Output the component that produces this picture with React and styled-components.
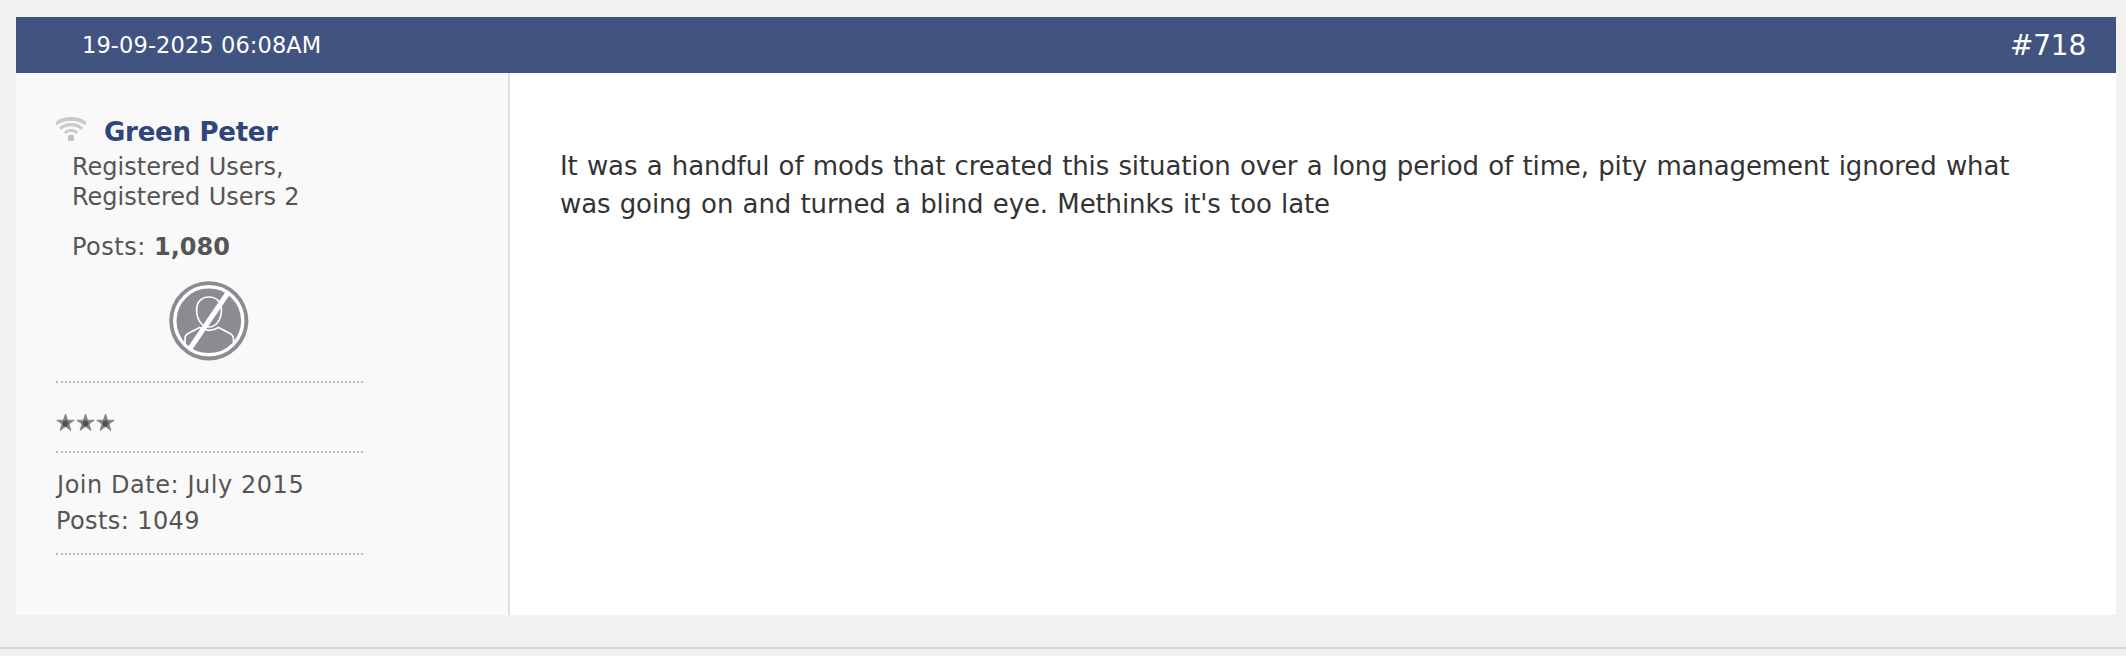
import React from 'react'
import styled, { createGlobalStyle } from 'styled-components'

const post = {
  date: '19-09-2025 06:08AM',
  number: '#718',
  user: 'Green Peter',
  roles: ['Registered Users,', 'Registered Users 2'],
  postCount: '1,080',
  stars: 3,
  joined: 'July 2015',
  posts: '1049',
  lines: [
    'It was a handful of mods that created this situation over a long period of time, pity management ignored what',
    "was going on and turned a blind eye. Methinks it's too late"
  ]
}

const App = () => (
  <>
    <GlobalStyle />
    <Page>
      <Post>
        <PostHeader>
          <PostDate>{post.date}</PostDate>
          <PostNumber>{post.number}</PostNumber>
        </PostHeader>
        <PostBody>
          <UserPanel>
            <UserRow>
              <OfflineIcon />
              <UserName>{post.user}</UserName>
            </UserRow>
            <Roles>
              {post.roles.map(role => <div key={role}>{role}</div>)}
            </Roles>
            <PostCount><span>Posts: </span><b>{post.postCount}</b></PostCount>
            <AvatarRow><Avatar /></AvatarRow>
            <StarRow>
              {Array.from({ length: post.stars }, (_, i) => <Star key={i} />)}
            </StarRow>
            <UserStats>
              <JoinDate>Join Date: {post.joined}</JoinDate>
              <div>Posts: {post.posts}</div>
            </UserStats>
          </UserPanel>
          <Message>
            {post.lines.map(line => <div key={line}>{line}</div>)}
          </Message>
        </PostBody>
      </Post>
      <Divider />
    </Page>
  </>
)

const OfflineIcon = () => (
  <svg width="30" height="24" viewBox="0 0 30 24" fill="none" stroke="#cacaca">
    <path d="M0 6.8C8 0.2 22 0.2 30 6.8" strokeWidth="3.6" />
    <path d="M4 11.8C10 6.2 20 6.2 26 11.8" strokeWidth="3.2" />
    <path d="M9 16C12 12.6 18 12.6 21 16" strokeWidth="2.8" />
    <rect x="12" y="18" width="6" height="6" rx="1" fill="#c2c2c2" stroke="none" />
  </svg>
)

const Avatar = () => (
  <svg width="80" height="80" viewBox="0 0 80 80" fill="none" stroke="#fff">
    <circle cx="39.8" cy="39.8" r="39.6" fill="#8b8b91" stroke="none" />
    <circle cx="39.8" cy="39.8" r="34" strokeWidth="3.4" />
    <path d="M40 16C48 16 52.4 21.5 52.4 29C52.4 38 47.5 46 40 46C32.5 46 27.6 38 27.6 29C27.6 21.5 32 16 40 16Z" strokeWidth="1.7" />
    <path d="M16 63V58C16 55 17 53.5 19.5 52.3L30.5 46.5C36 50.2 44 50.2 49.500 46.5L60.5 52.3C63 53.5 64.5 55 64.5 58V61" strokeWidth="1.7" />
    <path d="M21 67.5L58.5 12.5" strokeWidth="5" />
  </svg>
)

const Star = () => (
  <svg width="20" height="20" viewBox="0 0 20 20">
    <path d="M9.5 1L11.7 7.2H18.3L13 11L15 17.5L9.5 13.6L4 17.5L6 11L0.7 7.2H7.3Z" fill="#858585" stroke="#6c6c6c" strokeWidth="0.6" />
    <circle cx="9.5" cy="10.5" r="2.9" fill="#505050" />
  </svg>
)

const GlobalStyle = createGlobalStyle`
  body {
    margin: 0;
    background: #f1f1f1;
    font-family: "DejaVu Sans", sans-serif;
  }
`

const Page = styled.div`
  box-sizing: border-box;
  height: 656px;
  padding-top: 17px;
  overflow: hidden;
`

const Post = styled.div`
  margin: 0 10px 0 16px;
`

const PostHeader = styled.div`
  display: flex;
  align-items: center;
  justify-content: space-between;
  height: 56px;
  padding: 0 30px 0 66px;
  color: white;
  background: #415380;
`

const PostDate = styled.span`
  font-size: 22.5px;
  letter-spacing: 0.1px;
`

const PostNumber = styled.span`
  font-size: 28px;
  letter-spacing: -0.2px;
`

const PostBody = styled.div`
  display: flex;
  height: 542px;
  background: white;
`

const UserPanel = styled.div`
  box-sizing: border-box;
  width: 494px;
  padding: 44px 145px 0 40px;
  border-right: 2px solid #e0e0e0;
  background: #f9f9f9;
  color: #555;
  font-size: 24px;
`

const UserRow = styled.div`
  display: flex;
  gap: 18px;
  height: 30px;
`

const UserName = styled.span`
  color: #2f457c;
  font-size: 26px;
  font-weight: bold;
  line-height: 30px;
  letter-spacing: -0.25px;
`

const Roles = styled.div`
  margin-top: 5px;
  padding-left: 16px;
  line-height: 30px;
  word-spacing: 0.8px;
`

const PostCount = styled.div`
  margin-top: 20px;
  padding-left: 16px;
  line-height: 30px;

  span {
    letter-spacing: 0.5px;
  }
`

const AvatarRow = styled.div`
  display: flex;
  height: 80px;
  padding: 19px 0 20px 113px;
  border-bottom: 2px dotted #b8b8b8;
`

const StarRow = styled.div`
  display: flex;
  height: 38px;
  padding-top: 30px;
  border-bottom: 2px dotted #b8b8b8;
`

const UserStats = styled.div`
  padding: 14px 0;
  border-bottom: 2px dotted #b8b8b8;
  line-height: 36px;
  letter-spacing: 0.4px;
`

const JoinDate = styled.div`
  padding-left: 1px;
  letter-spacing: 0.55px;
`

const Message = styled.div`
  flex: 1;
  padding: 74px 0 0 50px;
  color: #333;
  font-size: 26px;
  line-height: 38px;
  letter-spacing: -0.12px;
  word-spacing: 1.2px;
  white-space: nowrap;
`

const Divider = styled.div`
  height: 2px;
  margin-top: 32px;
  background: #d3d3d3;
`

export default App
